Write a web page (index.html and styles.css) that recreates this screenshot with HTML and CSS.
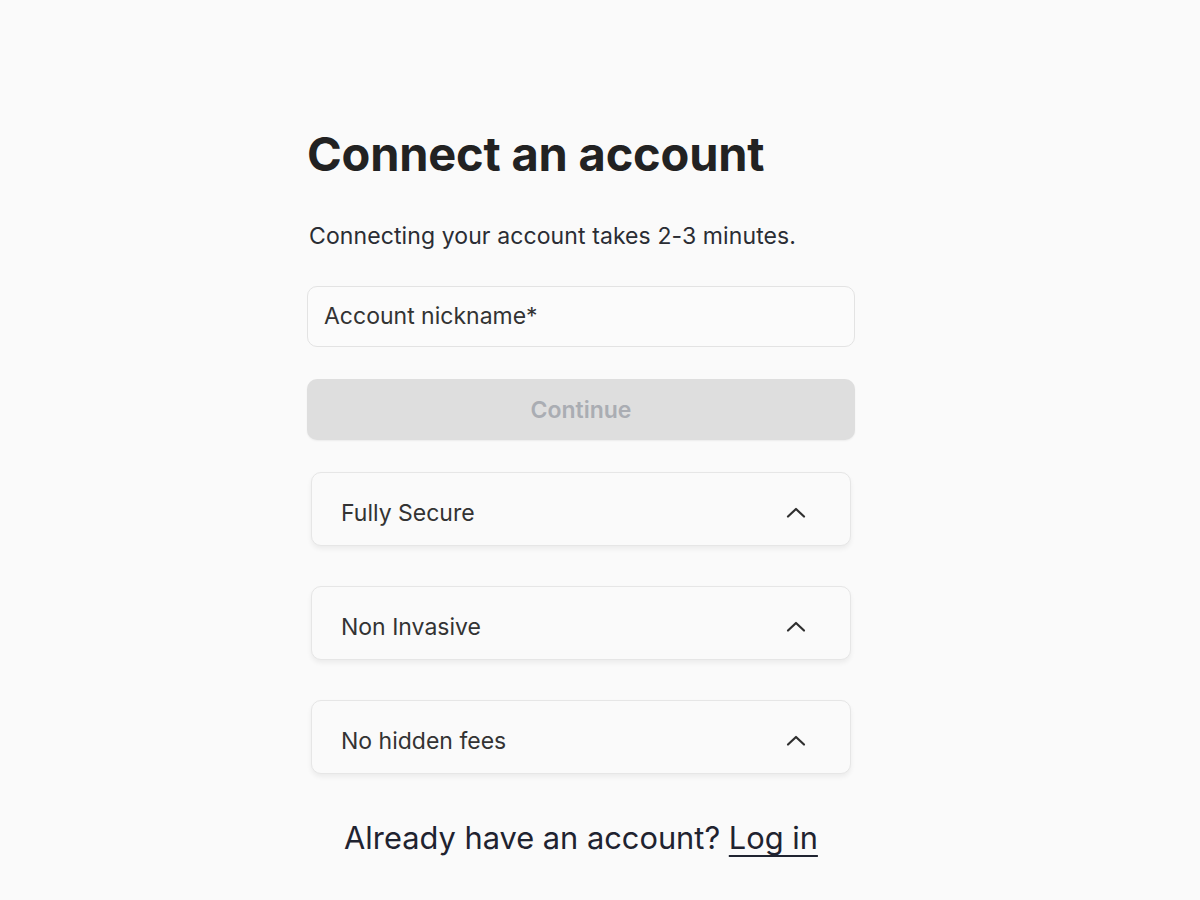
FILE: index.html
```html
<!DOCTYPE html>
<html lang="en">
<head>
<meta charset="utf-8">
<title>Connect an account</title>
<link rel="stylesheet" href="styles.css">
</head>
<body>
<main class="page">
  <section class="panel">
    <h1 class="title">Connect an account</h1>
    <p class="subtitle">Connecting your account takes 2-3 minutes.</p>
    <div class="field">
      <span class="placeholder">Account nickname*</span>
    </div>
    <button class="continue" type="button" disabled>Continue</button>
    <ul class="features">
      <li class="feature">
        <span class="feature-label">Fully Secure</span>
        <svg class="chevron" viewBox="0 0 24 24" width="24" height="24" aria-hidden="true"><path d="M4 15.5 L12 8 L20 15.5" fill="none" stroke="#2f2f2f" stroke-width="2.2" stroke-linecap="round" stroke-linejoin="round"/></svg>
      </li>
      <li class="feature">
        <span class="feature-label">Non Invasive</span>
        <svg class="chevron" viewBox="0 0 24 24" width="24" height="24" aria-hidden="true"><path d="M4 15.5 L12 8 L20 15.5" fill="none" stroke="#2f2f2f" stroke-width="2.2" stroke-linecap="round" stroke-linejoin="round"/></svg>
      </li>
      <li class="feature">
        <span class="feature-label">No hidden fees</span>
        <svg class="chevron" viewBox="0 0 24 24" width="24" height="24" aria-hidden="true"><path d="M4 15.5 L12 8 L20 15.5" fill="none" stroke="#2f2f2f" stroke-width="2.2" stroke-linecap="round" stroke-linejoin="round"/></svg>
      </li>
    </ul>
    <p class="footer">Already have an account? <a class="login" href="#">Log in</a></p>
  </section>
</main>
</body>
</html>
```
FILE: styles.css
```css
html, body {
  margin: 0;
  padding: 0;
}
body {
  background: #fafafa;
  font-family: "Inter", "Liberation Sans", sans-serif;
  color: #222;
}
.page {
  padding: 126px 0 0 307px;
}
.panel {
  width: 548px;
  display: flex;
  flex-direction: column;
}
.title {
  margin: 0;
  font-size: 47px;
  font-weight: 700;
  line-height: 56px;
  color: #222222;
  letter-spacing: -0.2px;
}
.subtitle {
  margin: 40px 0 0 2px;
  font-size: 23px;
  line-height: 28px;
  letter-spacing: 0.1px;
  color: #2a2d34;
}
.field {
  margin-top: 36px;
  height: 61px;
  box-sizing: border-box;
  border: 1.5px solid #e3e3e3;
  border-radius: 10px;
  background: #fbfbfb;
  display: flex;
  align-items: center;
  padding: 0 16px 2px;
}
.placeholder {
  font-size: 23px;
  color: #333333;
}
.continue {
  margin-top: 32px;
  height: 61px;
  border: none;
  border-radius: 10px;
  background: #dedede;
  font-family: inherit;
  font-size: 23px;
  font-weight: 600;
  color: #aaadb3;
  box-shadow: 0 1px 2px rgba(0,0,0,0.06);
}
.features {
  list-style: none;
  margin: 32px 4px 0;
  padding: 0;
  display: flex;
  flex-direction: column;
  gap: 40px;
}
.feature {
  height: 74px;
  box-sizing: border-box;
  border: 1.5px solid #e6e6e6;
  border-radius: 10px;
  background: #fafafa;
  box-shadow: 0 3px 5px rgba(0,0,0,0.06);
  display: flex;
  align-items: center;
  justify-content: space-between;
  padding: 8px 42px 0 29px;
}
.feature-label {
  font-size: 23px;
  color: #333333;
}
.chevron {
  display: block;
}
.footer {
  margin: 45px 0 0;
  text-align: center;
  font-size: 30.8px;
  line-height: 38px;
  color: #1f2330;
}
.login {
  color: #1f2330;
  text-decoration: underline;
  text-decoration-thickness: 2px;
  text-underline-offset: 6px;
  text-decoration-skip-ink: none;
}
```
